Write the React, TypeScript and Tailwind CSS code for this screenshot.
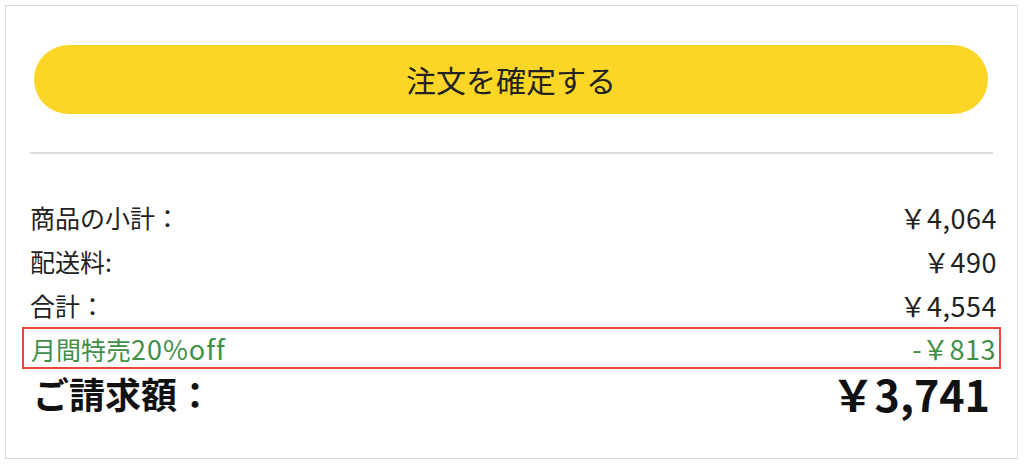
const rows = [
  { label: "商品の小計：", value: "￥4,064" },
  { label: "配送料:", value: "￥490" },
  { label: "合計：", value: "￥4,554" },
];

const App = () => {
  return (
    <div className="w-[1024px] h-[471px] bg-white pt-[5px] pl-[5px] font-['Noto_Sans_CJK_JP',sans-serif] text-[#222]">
      <section className="w-[1013px] h-[454px] border border-[#dcdcdc] px-[24px] pt-[39px]">
        <button className="ml-[4px] w-[954px] h-[69px] rounded-full bg-[#fbd626] text-[30px] text-[#222] flex items-center justify-center">
          注文を確定する
        </button>
        <hr className="mt-[38px] border-0 h-[2px] bg-[#dedede]" />
        <ul className="mt-[41px] flex flex-col leading-none">
          {rows.map((row) => (
            <li key={row.label} className="h-[44px] flex items-center justify-between">
              <span className="text-[25px]">{row.label}</span>
              <span className="-mr-[4px] text-[27px] tracking-[0.5px]">{row.value}</span>
            </li>
          ))}
          <li className="-mx-[8px] h-[42px] px-[7px] border-2 border-[#e5483a] flex items-center justify-between text-[#3f8f48]">
            <span className="text-[25px]">
              月間特売<span className="text-[27px] tracking-[1px]">20%off</span>
            </span>
            <span className="-mr-[4px] text-[27px] tracking-[0.5px]">-￥813</span>
          </li>
          <li className="h-[48px] flex items-center justify-between font-bold text-[#111]">
            <span className="pl-[3px] text-[36px]">ご請求額：</span>
            <span className="pr-[3px] text-[43px]">￥3,741</span>
          </li>
        </ul>
      </section>
    </div>
  );
};

export default App;
